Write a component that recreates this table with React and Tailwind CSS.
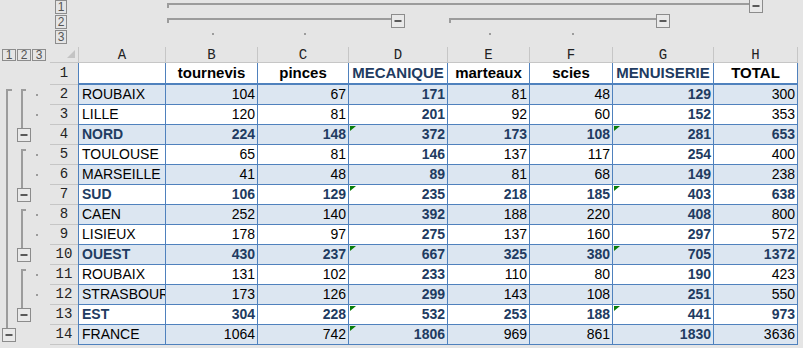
const widths = ['w-[88px]', 'w-[92px]', 'w-[91px]', 'w-[99px]', 'w-[82px]', 'w-[83px]', 'w-[101px]', 'w-[84px]']
const letters = ['A', 'B', 'C', 'D', 'E', 'F', 'G', 'H']
const heads = ['', 'tournevis', 'pinces', 'MECANIQUE', 'marteaux', 'scies', 'MENUISERIE', 'TOTAL']

// kind: d = detail, s = subtotal, t = grand total
const rows = [
  ['ROUBAIX', 104, 67, 171, 81, 48, 129, 300, 'd'],
  ['LILLE', 120, 81, 201, 92, 60, 152, 353, 'd'],
  ['NORD', 224, 148, 372, 173, 108, 281, 653, 's'],
  ['TOULOUSE', 65, 81, 146, 137, 117, 254, 400, 'd'],
  ['MARSEILLE', 41, 48, 89, 81, 68, 149, 238, 'd'],
  ['SUD', 106, 129, 235, 218, 185, 403, 638, 's'],
  ['CAEN', 252, 140, 392, 188, 220, 408, 800, 'd'],
  ['LISIEUX', 178, 97, 275, 137, 160, 297, 572, 'd'],
  ['OUEST', 430, 237, 667, 325, 380, 705, 1372, 's'],
  ['ROUBAIX', 131, 102, 233, 110, 80, 190, 423, 'd'],
  ['STRASBOURG', 173, 126, 299, 143, 108, 251, 550, 'd'],
  ['EST', 304, 228, 532, 253, 188, 441, 973, 's'],
  ['FRANCE', 1064, 742, 1806, 969, 861, 1830, 3636, 't'],
]

const LINE = '#9c9c9c'

function MinusBox({ x, y }) {
  return (
    <g>
      <rect x={x + 0.5} y={y + 0.5} width={13} height={13} fill="#e9e9e9" stroke="#8c8c8c" />
      <rect x={x + 3.5} y={y + 6} width={7} height={2} fill="#5a5a5a" />
    </g>
  )
}

function TopOutline() {
  return (
    <svg width="725" height="47" className="block shrink-0">
      <rect x={89} y={3} width={582} height={2} fill={LINE} />
      <rect x={89} y={3} width={2} height={5} fill={LINE} />
      <MinusBox x={671} y={-1} />
      <rect x={89} y={18} width={224} height={2} fill={LINE} />
      <rect x={89} y={18} width={2} height={5} fill={LINE} />
      <MinusBox x={313} y={14} />
      <rect x={371} y={18} width={207} height={2} fill={LINE} />
      <rect x={371} y={18} width={2} height={5} fill={LINE} />
      <MinusBox x={578} y={14} />
      {[134, 226, 411, 494].map((x) => (
        <rect key={x} x={x} y={33} width={2} height={2} fill={LINE} />
      ))}
    </svg>
  )
}

function LeftOutline() {
  const top = (r) => 22 + 20 * (r - 2)
  const groups = [[2, 4], [5, 7], [8, 10], [11, 13]]
  const details = [2, 3, 5, 6, 8, 9, 11, 12]
  return (
    <svg width="50" height="282" className="block shrink-0">
      <rect x={6} y={26} width={6} height={2} fill={LINE} />
      <rect x={6} y={26} width={2} height={top(14) + 3 - 26} fill={LINE} />
      <MinusBox x={2} y={top(14) + 3} />
      {groups.map(([s, b]) => (
        <g key={s}>
          <rect x={21} y={top(s) + 4} width={5} height={2} fill={LINE} />
          <rect x={21} y={top(s) + 4} width={2} height={top(b) + 3 - top(s) - 4} fill={LINE} />
          <MinusBox x={17} y={top(b) + 3} />
        </g>
      ))}
      {details.map((r) => (
        <rect key={r} x={36} y={top(r) + 9} width={2} height={2} fill={LINE} />
      ))}
    </svg>
  )
}

function LevelBox({ n, cls }) {
  return (
    <div className={`flex items-center justify-center border border-[#8c8c8c] text-[12px] leading-none text-[#555] ${cls}`}>
      {n}
    </div>
  )
}

function Flag() {
  return (
    <span className="absolute left-[1px] top-[1px] h-0 w-0 border-t-[5px] border-r-[6px] border-t-[#0a7d0a] border-r-transparent" />
  )
}

const mono = { fontFamily: '"Liberation Mono", "DejaVu Sans Mono", monospace' }

export default function App() {
  return (
    <div
      className="h-[348px] w-[803px] overflow-hidden bg-[#e5e5e5] text-black"
      style={{ fontFamily: '"Liberation Sans", Arial, sans-serif' }}
    >
      <div className="flex h-[47px]">
        <div className="flex w-[78px] shrink-0 flex-col gap-px pl-[55px]">
          <LevelBox n="1" cls="h-[14px] w-[12px]" />
          <LevelBox n="2" cls="h-[14px] w-[12px]" />
          <LevelBox n="3" cls="h-[14px] w-[12px]" />
        </div>
        <TopOutline />
      </div>

      <div className="flex h-[16px]">
        <div className="flex w-[50px] shrink-0 gap-px pl-[2px] pt-[2px]">
          <LevelBox n="1" cls="h-[12px] w-[14px]" />
          <LevelBox n="2" cls="h-[12px] w-[14px]" />
          <LevelBox n="3" cls="h-[12px] w-[14px]" />
        </div>
        <div className="relative w-[28px] shrink-0 border-b border-[#c6c6c6]">
          <span className="absolute left-[17px] top-[3px] h-0 w-0 border-b-[8px] border-l-[8px] border-b-[#c4c4c4] border-l-transparent" />
        </div>
        {letters.map((l, i) => (
          <div
            key={l}
            className={`${widths[i]} flex shrink-0 items-center justify-center border-b border-r border-[#c6c6c6] pt-px text-[14px] text-[#222] ${i === 0 ? 'border-l' : ''}`}
            style={mono}
          >
            {l}
          </div>
        ))}
      </div>

      <div className="flex">
        <LeftOutline />
        <div className="flex flex-col">
          <div className="flex h-[22px]">
            <div
              className="flex w-[28px] shrink-0 items-center justify-center border-b border-[#c6c6c6] text-[14px] text-[#222]"
              style={mono}
            >
              1
            </div>
            {heads.map((h, i) => (
              <div
                key={i}
                className={`${widths[i]} flex shrink-0 items-center justify-center overflow-hidden whitespace-nowrap border-b-2 border-r border-[#4f81bd] bg-white text-[15px] font-bold ${i === 0 ? 'border-l' : ''} ${i === 3 || i === 6 ? 'text-[#213b61]' : 'text-black'}`}
              >
                {h}
              </div>
            ))}
          </div>

          {rows.map((row, ri) => {
            const n = ri + 2
            const kind = row[8]
            const band = n % 2 === 0 ? 'bg-[#dce6f1]' : 'bg-white'
            return (
              <div key={n} className="flex h-[20px]">
                <div
                  className="flex w-[28px] shrink-0 items-center justify-center border-b border-[#c6c6c6] text-[14px] text-[#222]"
                  style={mono}
                >
                  {n}
                </div>
                {row.slice(0, 8).map((v, ci) => {
                  const strong = kind === 's' || ci === 3 || ci === 6
                  const flag = (kind === 's' && (ci === 3 || ci === 6)) || (kind === 't' && ci === 3)
                  return (
                    <div
                      key={ci}
                      className={`${widths[ci]} ${band} relative flex shrink-0 items-center overflow-hidden whitespace-nowrap border-b border-r border-[#4f81bd] text-[14px] ${ci === 0 ? 'justify-start border-l pl-[3px]' : 'justify-end pr-[2px]'} ${strong ? 'font-bold text-[#213b61]' : 'text-black'}`}
                    >
                      {flag && <Flag />}
                      {v}
                    </div>
                  )
                })}
              </div>
            )
          })}
        </div>
      </div>
    </div>
  )
}
